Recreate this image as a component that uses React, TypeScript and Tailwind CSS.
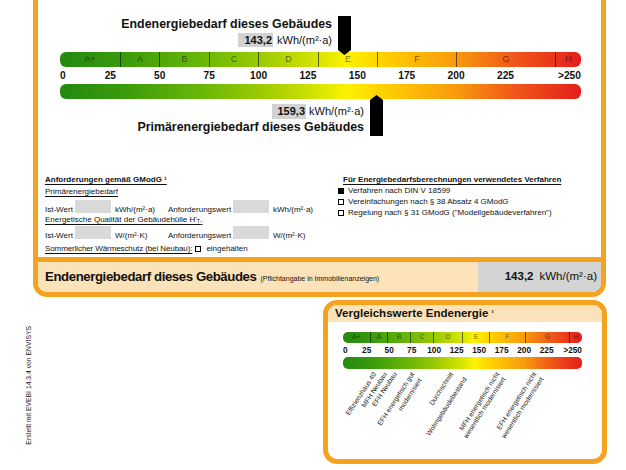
import React from "react";

const GRAD =
  "bg-[linear-gradient(to_right,#238a0f_0%,#3a9a0c_12%,#6cb808_28%,#98c904_38%,#d8e600_50%,#fff200_55%,#ffd400_61%,#f89a0e_76%,#f05818_87%,#e41e1e_100%)]";

const CLASSES = ["A+", "A", "B", "C", "D", "E", "F", "G", "H"];
const NUMS = ["25", "50", "75", "100", "125", "150", "175", "200", "225"];

type ScaleProps = {
  big: boolean;
  segs: number[];
  first: number;
  step: number;
  last: number;
};

function Scale({ big, segs, first, step, last }: ScaleProps) {
  return (
    <div className="flex flex-col">
      <div
        className={`flex overflow-hidden ${GRAD} ${
          big ? "h-[15px] rounded-[6px]" : "h-[11px] rounded-[5px]"
        }`}
      >
        {segs.map((w, i) => (
          <div
            key={i}
            style={{ width: w }}
            className={`flex items-center justify-center text-black/55 ${
              i > 0 ? "border-l-[1.5px] border-black/55" : ""
            } ${big ? "text-[9px]" : "text-[7px]"}`}
          >
            {CLASSES[i]}
          </div>
        ))}
      </div>
      <div
        className={`flex items-center font-bold text-[#111] ${
          big ? "h-[17px] text-[10.2px]" : "h-[14px] text-[8.3px]"
        }`}
      >
        <div style={{ width: first }}>0</div>
        {NUMS.map((n) => (
          <div key={n} style={{ width: step }} className="text-center">
            {n}
          </div>
        ))}
        <div style={{ width: last }} className="text-right">
          &gt;250
        </div>
      </div>
      <div
        className={`${GRAD} ${
          big ? "h-[15px] rounded-[6px]" : "h-[12px] rounded-[5px]"
        }`}
      />
    </div>
  );
}

function Box({ filled }: { filled?: boolean }) {
  return (
    <span
      className={`inline-block w-[6px] h-[6px] border-[0.8px] border-black shrink-0 ${
        filled ? "bg-black" : "bg-white"
      }`}
    />
  );
}

const LABELS: { text: string; cls: string }[] = [
  { text: "Effizienzhaus 40", cls: "right-[227px] top-[47px]" },
  { text: "MFH Neubau", cls: "right-[217px] top-[47px]" },
  { text: "EFH Neubau", cls: "right-[207px] top-[47px]" },
  { text: "EFH energetisch gut", cls: "right-[189px] top-[47px]" },
  { text: "modernisiert", cls: "right-[182px] top-[53px]" },
  { text: "Durchschnitt", cls: "right-[150px] top-[47px]" },
  { text: "Wohngebäudebestand", cls: "right-[137px] top-[52px]" },
  { text: "MFH energetisch nicht", cls: "right-[104px] top-[47px]" },
  { text: "wesentlich modernisiert", cls: "right-[98px] top-[52px]" },
  { text: "EFH energetisch nicht", cls: "right-[67px] top-[47px]" },
  { text: "wesentlich modernisiert", cls: "right-[60px] top-[52px]" },
];

function Marker({ down }: { down: boolean }) {
  return down ? (
    <svg width="13" height="39" viewBox="0 0 13 39">
      <polygon points="0,0 13,0 13,34 6.5,39 0,34" fill="#000" />
    </svg>
  ) : (
    <svg width="13" height="41" viewBox="0 0 13 41">
      <polygon points="6.5,0 13,5 13,41 0,41 0,5" fill="#000" />
    </svg>
  );
}

export default function App() {
  const ul = "underline decoration-[0.8px] underline-offset-[1.5px]";
  return (
    <div className="w-[626px] h-[470px] bg-white overflow-hidden text-[#111] font-['Liberation_Sans',Arial,sans-serif]">
      {/* Main certificate box */}
      <div className="ml-[33px] w-[573px] border-x-[5px] border-b-[5px] border-[#f5a31f] rounded-b-[14px] overflow-hidden flex flex-col">
        {/* Scale section */}
        <div className="relative pl-[22px] pt-[17px]">
          <div className="w-[272px] flex flex-col items-end">
            <div className="text-[12.4px] leading-[14px] font-bold">
              Endenergiebedarf dieses Gebäudes
            </div>
            <div className="mt-[2px] flex items-center h-[14px]">
              <div className="h-[14px] w-[35px] bg-[#d2d2d2] text-[11px] font-bold leading-[14px] text-right pr-[1px]">
                143,2
              </div>
              <div className="ml-[4px] text-[11px] leading-[14px]">kWh/(m²·a)</div>
            </div>
          </div>
          <div className="mt-[5px] w-[521px]">
            <Scale big segs={[60, 39, 50, 49, 60, 59, 79, 99, 26]} first={25.7} step={49.4} last={50.7} />
          </div>
          <div className="mt-[5px] w-[304px] flex flex-col items-end">
            <div className="flex items-center h-[15px]">
              <div className="h-[15px] w-[34px] bg-[#d2d2d2] text-[11px] font-bold leading-[15px] text-right pr-[1px]">
                159,3
              </div>
              <div className="ml-[3px] text-[11px] leading-[15px]">kWh/(m²·a)</div>
            </div>
            <div className="mt-[1px] text-[12.4px] leading-[14px] font-bold">
              Primärenergiebedarf dieses Gebäudes
            </div>
          </div>
          <div className="absolute left-[300px] top-[16px]">
            <Marker down />
          </div>
          <div className="absolute left-[332px] top-[95px]">
            <Marker down={false} />
          </div>
        </div>

        {/* Requirements section */}
        <div className="mt-[40px] flex text-[8px] leading-[11px] pb-[3px]">
          <div className="w-[300px] pl-[7px] flex flex-col">
            <div className={`font-bold ${ul}`}>Anforderungen gemäß GModG ¹</div>
            <div className={`mt-[1px] ${ul}`}>Primärenergiebedarf</div>
            <div className="mt-[2px] flex items-end h-[15px]">
              <span className="w-[30px] mb-[-1px]">Ist-Wert</span>
              <span className="w-[36px] h-[13px] mb-[1px] bg-[#d9d9d9]" />
              <span className="w-[57px] pl-[4px] mb-[-1px]">kWh/(m²·a)</span>
              <span className="w-[65px] mb-[-1px]">Anforderungswert</span>
              <span className="w-[36px] h-[13px] mb-[1px] bg-[#d9d9d9]" />
              <span className="pl-[4px] mb-[-1px]">kWh/(m²·a)</span>
            </div>
            <div className={`${ul}`}>
              Energetische Qualität der Gebäudehülle H'<sub className="text-[5.5px]">T</sub>.
            </div>
            <div className="flex items-end h-[15px]">
              <span className="w-[30px] mb-[-1px]">Ist-Wert</span>
              <span className="w-[36px] h-[13px] mb-[1px] bg-[#d9d9d9]" />
              <span className="w-[57px] pl-[4px] mb-[-1px]">W/(m²·K)</span>
              <span className="w-[65px] mb-[-1px]">Anforderungswert</span>
              <span className="w-[36px] h-[13px] mb-[1px] bg-[#d9d9d9]" />
              <span className="pl-[4px] mb-[-1px]">W/(m²·K)</span>
            </div>
            <div className="mt-[3px] flex items-center">
              <span className={`tracking-[-0.1px] ${ul}`}>Sommerlicher Wärmeschutz (bei Neubau):</span>
              <span className="ml-[3px] flex items-center">
                <Box />
              </span>
              <span className="ml-[5px]">eingehalten</span>
            </div>
          </div>
          <div className="flex flex-col">
            <div className={`ml-[5px] font-bold ${ul}`}>
              Für Energiebedarfsberechnungen verwendetes Verfahren
            </div>
            <div className="flex items-center gap-[4px]">
              <Box filled />
              <span>Verfahren nach DIN V 18599</span>
            </div>
            <div className="flex items-center gap-[4px]">
              <Box />
              <span>Vereinfachungen nach § 38 Absatz 4 GModG</span>
            </div>
            <div className="flex items-center gap-[4px]">
              <Box />
              <span>Regelung nach § 31 GModG ("Modellgebäudeverfahren")</span>
            </div>
          </div>
        </div>

        {/* Footer row */}
        <div className="h-[35px] border-t-[5px] border-[#f5a31f] flex bg-[#fce2b8]">
          <div className="flex-1 flex items-baseline pl-[7px] pt-[7px]">
            <span className="text-[13.2px] tracking-[-0.4px] font-bold leading-[16px]">
              Endenergiebedarf dieses Gebäudes
            </span>
            <span className="ml-[4px] text-[7px]">(Pflichtangabe in Immobilienanzeigen)</span>
          </div>
          <div className="w-[123px] bg-[#d4d4d4] flex items-center justify-end pr-[4px] gap-[6px] text-[11.5px]">
            <span className="font-bold">143,2</span>
            <span>kWh/(m²·a)</span>
          </div>
        </div>
      </div>

      {/* Lower area */}
      <div className="flex items-start pt-[3px]">
        <div className="w-[323px] pl-[25px]">
          <div className="mt-[26px] [writing-mode:vertical-rl] rotate-180 text-[6.8px] leading-[7px] text-[#222]">
            Erstellt mit EVEBI 14.3.4 von ENVISYS
          </div>
        </div>
        <div className="w-[284px] h-[164px] border-[5px] border-[#f5a31f] rounded-[14px] overflow-hidden flex flex-col">
          <div className="h-[17px] bg-[#fce2b8] flex items-center pl-[7px]">
            <span className="text-[11.5px] font-bold leading-[13px]">
              Vergleichswerte Endenergie <span className="text-[6px] align-top">³</span>
            </span>
          </div>
          <div className="relative flex-1 pl-[15px] pt-[10px]">
            <div className="w-[239px]">
              <Scale
                big={false}
                segs={[27, 17, 23, 23, 29, 27, 36, 44, 13]}
                first={12.4}
                step={22.5}
                last={24.1}
              />
            </div>
            {LABELS.map((l, i) => (
              <div
                key={i}
                className={`absolute whitespace-nowrap text-[6.8px] leading-[8px] text-[#222] origin-right -rotate-[57deg] ${l.cls}`}
              >
                {l.text}
              </div>
            ))}
          </div>
        </div>
      </div>
    </div>
  );
}
